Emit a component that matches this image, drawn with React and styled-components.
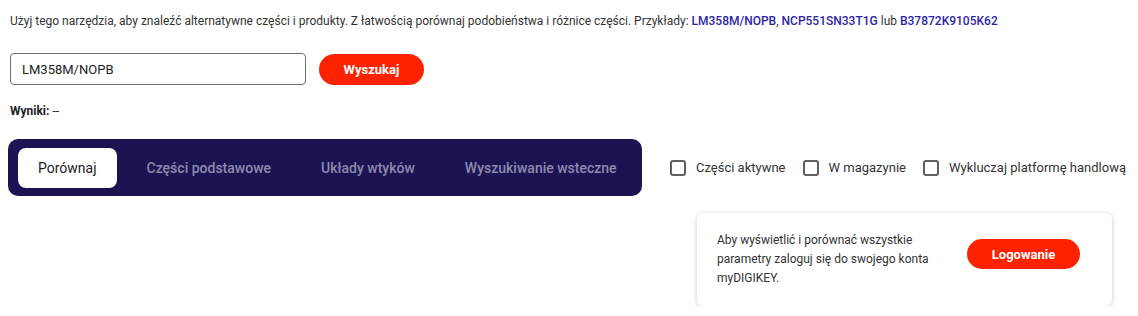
import React, { useState } from 'react';
import styled, { createGlobalStyle } from 'styled-components';

const GlobalStyle = createGlobalStyle`
  body {
    margin: 0;
    background: #fff;
    font-family: Roboto, "Liberation Sans", Arial, sans-serif;
    color: #333;
  }
`;

const Page = styled.div`
  padding: 13px 8px 0 8px;
`;

const Intro = styled.p`
  margin: 0 0 0 2px;
  font-size: 12px;
  line-height: 16px;
  color: #333;
`;

const Example = styled.a`
  color: #2b26a8;
  font-weight: 500;
  text-decoration: none;
  cursor: pointer;
`;

const SearchRow = styled.div`
  display: flex;
  align-items: center;
  gap: 13px;
  margin: 24px 0 0 2px;
`;

const SearchInput = styled.input`
  box-sizing: border-box;
  width: 296px;
  height: 32px;
  padding: 0 11px;
  border: 1px solid #707070;
  border-radius: 4px;
  font-family: inherit;
  font-size: 13px;
  color: #222;
  outline: none;
`;

const RedButton = styled.button`
  height: ${p => p.$h || 31}px;
  width: ${p => p.$w}px;
  border: none;
  border-radius: 16px;
  background: #ff2200;
  color: #fff;
  font-family: inherit;
  font-weight: 700;
  font-size: 13px;
  cursor: pointer;
  flex-shrink: 0;
`;

const Results = styled.div`
  margin: 18px 0 0 2px;
  font-size: 12px;
  line-height: 16px;
  color: #222;
  b {
    font-weight: 700;
  }
`;

const Main = styled.div`
  display: flex;
  gap: 28px;
  margin-top: 20px;
`;

const TabBar = styled.div`
  display: flex;
  align-items: center;
  gap: 10px;
  align-self: flex-start;
  width: 634px;
  box-sizing: border-box;
  height: 57px;
  padding: 0 10px;
  background: #1c1452;
  border-radius: 10px;
`;

const Tab = styled.button`
  height: 40px;
  padding: 0 20px;
  border: none;
  border-radius: 8px;
  background: ${p => (p.$active ? '#fff' : 'transparent')};
  color: ${p => (p.$active ? '#222' : '#8d8aae')};
  font-family: inherit;
  font-size: 14px;
  font-weight: ${p => (p.$active ? 400 : 500)};
  cursor: pointer;
  white-space: nowrap;
`;

const Side = styled.div`
  display: flex;
  flex-direction: column;
`;

const Filters = styled.div`
  display: flex;
  align-items: center;
  gap: 17px;
  height: 57px;
`;

const CheckLabel = styled.label`
  display: flex;
  align-items: center;
  gap: 10px;
  font-size: 13px;
  color: #333;
  white-space: nowrap;
  cursor: pointer;
`;

const Box = styled.span`
  box-sizing: border-box;
  width: 16px;
  height: 16px;
  border: 2px solid #5f5f5f;
  border-radius: 3px;
  background: ${p => (p.$on ? '#5f5f5f' : '#fff')};
`;

const Card = styled.div`
  display: flex;
  align-items: flex-start;
  justify-content: space-between;
  width: 415px;
  box-sizing: border-box;
  margin: 17px 0 0 27px;
  padding: 18px 32px 18px 20px;
  background: #fff;
  border-radius: 6px;
  box-shadow: 0 1px 5px rgba(0, 0, 0, 0.22);
`;

const CardText = styled.p`
  margin: 0;
  width: 225px;
  font-size: 12px;
  line-height: 19px;
  color: #333;
`;

const CardButton = styled(RedButton)`
  margin-top: 8px;
  border-radius: 15px;
`;

const tabs = ['Porównaj', 'Części podstawowe', 'Układy wtyków', 'Wyszukiwanie wsteczne'];
const filters = ['Części aktywne', 'W magazynie', 'Wykluczaj platformę handlową'];

export default function App() {
  const [active, setActive] = useState(0);
  const [checked, setChecked] = useState({});
  return (
    <Page>
      <GlobalStyle />
      <Intro>
        Użyj tego narzędzia, aby znaleźć alternatywne części i produkty. Z łatwością porównaj podobieństwa i różnice części. Przykłady:{' '}
        <Example>LM358M/NOPB</Example>, <Example>NCP551SN33T1G</Example> lub <Example>B37872K9105K62</Example>
      </Intro>
      <SearchRow>
        <SearchInput defaultValue="LM358M/NOPB" />
        <RedButton $w={105}>Wyszukaj</RedButton>
      </SearchRow>
      <Results>
        <b>Wyniki:</b> --
      </Results>
      <Main>
        <TabBar>
          {tabs.map((t, i) => (
            <Tab key={t} $active={i === active} onClick={() => setActive(i)}>
              {t}
            </Tab>
          ))}
        </TabBar>
        <Side>
          <Filters>
            {filters.map(f => (
              <CheckLabel key={f} onClick={() => setChecked(c => ({ ...c, [f]: !c[f] }))}>
                <Box $on={checked[f]} />
                {f}
              </CheckLabel>
            ))}
          </Filters>
          <Card>
            <CardText>
              Aby wyświetlić i porównać wszystkie parametry zaloguj się do swojego konta myDIGIKEY.
            </CardText>
            <CardButton $w={113} $h={30}>Logowanie</CardButton>
          </Card>
        </Side>
      </Main>
    </Page>
  );
}
